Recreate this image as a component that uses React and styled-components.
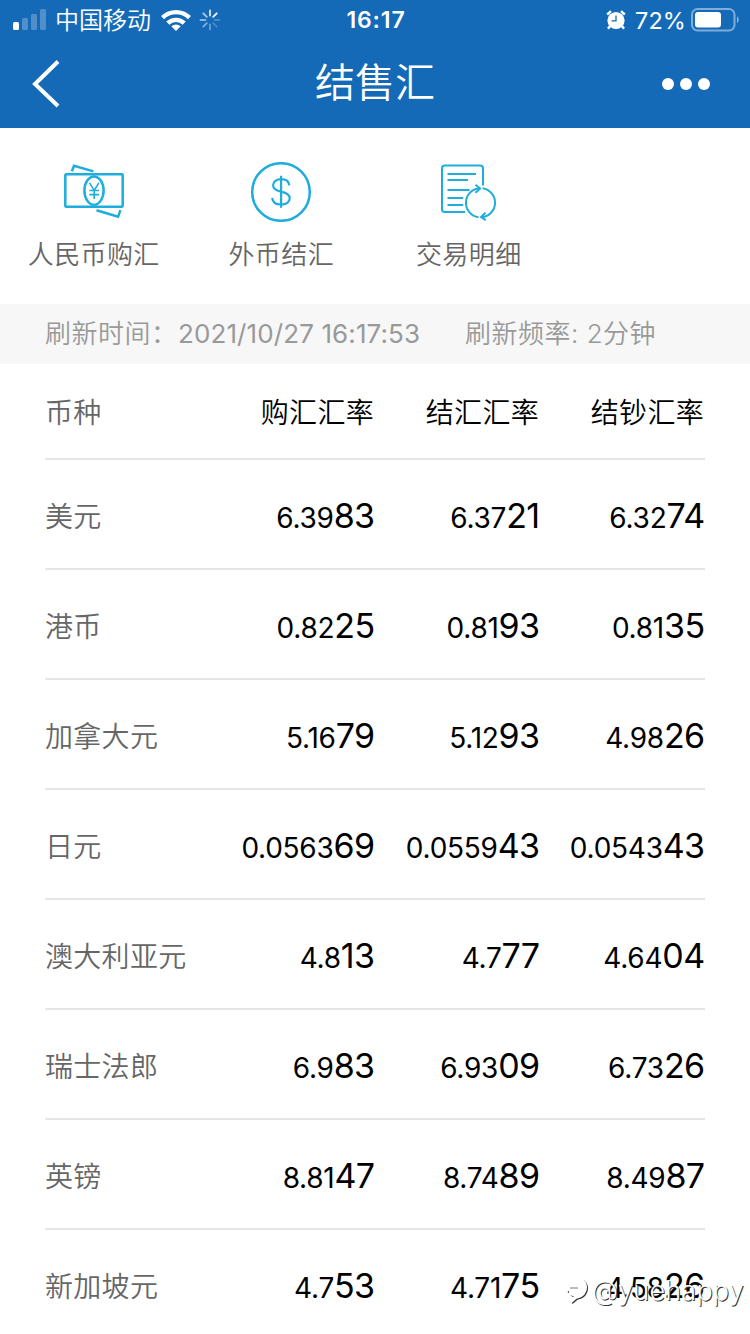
import React from 'react';
import styled, { createGlobalStyle } from 'styled-components';

const GlobalStyle = createGlobalStyle`
  * {
    box-sizing: border-box;
  }

  body {
    margin: 0;
    background: #fff;
    font-family: Inter, "Noto Sans CJK SC", sans-serif;
    overflow: hidden;
  }

  svg {
    display: block;
    flex-shrink: 0;
  }
`;

const Page = styled.div`
  position: relative;
  width: 750px;
  height: 1334px;
  overflow: hidden;
  background: #fff;
`;

const Header = styled.header`
  height: 128px;
  background: #156ab8;
  color: #fff;
`;

const StatusBar = styled.div`
  display: grid;
  grid-template-columns: 1fr 80px 1fr;
  align-items: center;
  height: 40px;
  padding: 0 10px 0 12px;
`;

const StatusGroup = styled.div`
  display: flex;
  align-items: center;
  justify-content: ${(props) => (props.$end ? 'flex-end' : 'flex-start')};
`;

const Carrier = styled.span`
  margin: 0 10px 0 8px;
  padding-top: 2px;
  font-size: 24px;
  font-weight: 350;
  line-height: 38px;
`;

const Spinner = styled.svg`
  margin-left: 8px;
`;

const Clock = styled.div`
  padding-top: 1px;
  font-size: 23px;
  font-weight: 600;
  line-height: 39px;
  letter-spacing: 0.9px;
  text-align: center;
`;

const Battery = styled.span`
  margin: 0 4px 0 9px;
  padding-top: 1px;
  font-size: 23.5px;
  line-height: 39px;
  letter-spacing: 0.1px;
`;

const NavBar = styled.div`
  display: grid;
  grid-template-columns: 120px 1fr 120px;
  align-items: center;
  height: 88px;
`;

const BackIcon = styled.svg`
  margin-left: 30px;
`;

const MoreIcon = styled.svg`
  margin-left: 31px;
`;

const PageTitle = styled.h1`
  margin: 0;
  padding-bottom: 2px;
  font-size: 40px;
  font-weight: 350;
  line-height: 84px;
  text-align: center;
`;

const Tools = styled.nav`
  display: grid;
  grid-template-columns: repeat(4, 187.5px);
  height: 176px;
  padding-top: 34px;
`;

const Tool = styled.div`
  display: flex;
  flex-direction: column;
  align-items: center;
`;

const ToolLabel = styled.span`
  margin-top: 15px;
  color: #666;
  font-size: 26px;
  font-weight: 350;
  line-height: 36px;
  letter-spacing: 0.4px;
  white-space: nowrap;
`;

const RefreshBar = styled.div`
  display: flex;
  height: 60px;
  padding-left: 45px;
  background: #f7f7f7;
  color: #999;
  font-size: 26px;
  font-weight: 350;
  line-height: 60px;
  white-space: nowrap;
`;

const RefreshLabel = styled.span`
  width: ${(props) => props.$width}px;
  letter-spacing: 0.5px;
`;

const RefreshTime = styled.span`
  width: 287px;
  font-weight: 400;
  line-height: 59px;
  letter-spacing: 0.1px;
`;

const Table = styled.div`
  margin: 0 45px;
`;

const Row = styled.div`
  display: grid;
  grid-template-columns: repeat(4, 165px);
  height: ${(props) => (props.$head ? 96 : 110)}px;
  border-bottom: 2px solid #e6e6e6;
  line-height: ${(props) => (props.$head ? 96 : 110)}px;
  white-space: nowrap;
`;

const Currency = styled.div`
  padding-top: ${(props) => (props.$head ? 1 : 2)}px;
  color: #666;
  font-size: 28px;
  font-weight: 350;
  letter-spacing: 0.3px;
`;

const ColumnTitle = styled.div`
  padding: 1px 1px 0 0;
  color: #000;
  font-size: 28px;
  font-weight: 350;
  letter-spacing: 0.3px;
  text-align: right;
`;

const Rate = styled.div`
  display: flex;
  align-items: baseline;
  justify-content: flex-end;
  padding: 1px 0.5px 0 0;
  color: #000;
  font-size: 28px;
  letter-spacing: -0.25px;
`;

const RateTail = styled.span`
  font-size: 34px;
  letter-spacing: -0.6px;
`;

const Watermark = styled.div`
  position: absolute;
  right: 6px;
  bottom: 25px;
  display: flex;
  align-items: center;
  gap: 3px;
  color: #fff;
  font-size: 27px;
  font-weight: 300;
  line-height: 36px;
  letter-spacing: 0.2px;
  text-shadow: 1px 1px 0 #333;
`;

const WatermarkLogo = styled.svg`
  filter: drop-shadow(1px 1px 0 #333);
`;

const rates = [
  { name: '美元', values: ['6.3983', '6.3721', '6.3274'] },
  { name: '港币', values: ['0.8225', '0.8193', '0.8135'] },
  { name: '加拿大元', values: ['5.1679', '5.1293', '4.9826'] },
  { name: '日元', values: ['0.056369', '0.055943', '0.054343'] },
  { name: '澳大利亚元', values: ['4.813', '4.777', '4.6404'] },
  { name: '瑞士法郎', values: ['6.983', '6.9309', '6.7326'] },
  { name: '英镑', values: ['8.8147', '8.7489', '8.4987'] },
  { name: '新加坡元', values: ['4.753', '4.7175', '4.5826'] },
];

const SignalIcon = () => (
  <svg width="35" height="22" viewBox="0 0 35 22" fill="#fff">
    <rect x="1" y="13" width="6" height="8" rx="1.5" />
    <g opacity="0.25">
      <rect x="10" y="9" width="6" height="12" rx="1.5" />
      <rect x="19" y="5" width="6" height="16" rx="1.5" />
      <rect x="28" y="0" width="6" height="21" rx="1.5" />
    </g>
  </svg>
);

const WifiIcon = () => (
  <svg width="30" height="22" viewBox="0 0 30 22" fill="none" stroke="#fff" strokeWidth="4.4">
    <path d="M1.5 8.6a19.3 19.3 0 0 1 27 0" />
    <path d="M6.8 14.2a11.8 11.8 0 0 1 16.4 0" />
    <path d="M15 22l-4.7-4.7a6.8 6.8 0 0 1 9.4 0z" fill="#fff" stroke="none" />
  </svg>
);

const SpinnerIcon = () => (
  <Spinner width="22" height="22" viewBox="0 0 22 22" stroke="#fff" strokeWidth="1.8" strokeLinecap="round">
    {[0.85, 0.95, 0.2, 0.2, 0.35, 0.45, 0.5, 0.65].map((opacity, i) => (
      <path key={i} d="M11 1.5v5" opacity={opacity} transform={`rotate(${i * 45} 11 11)`} />
    ))}
  </Spinner>
);

const AlarmIcon = () => (
  <svg width="20" height="20" viewBox="0 0 20 20" fill="none">
    <circle cx="10" cy="10.5" r="8.6" fill="#fff" />
    <path d="M1.2 4.5 5 1.2M15 1.2l3.8 3.3M4 16l-2 2.8M16 16l2 2.8" stroke="#fff" strokeWidth="2.4" />
    <path d="M10 5.5v5.3H5.5" stroke="#156ab8" strokeWidth="1.3" />
  </svg>
);

const BatteryIcon = () => (
  <svg width="50" height="24" viewBox="0 0 50 24" fill="none">
    <rect x="2" y="1" width="42.5" height="21.5" rx="5.5" stroke="#fff" strokeOpacity="0.45" strokeWidth="2" />
    <rect x="5" y="4" width="26" height="15.5" rx="3" fill="#fff" />
    <path d="M47 8.5c2.2 1 2.2 5.6 0 6.6z" fill="#fff" opacity="0.5" />
  </svg>
);

const BuyIcon = () => (
  <svg width="62" height="60" viewBox="0 0 62 60" fill="none" stroke="#1eaddc" strokeWidth="2.5">
    <rect x="2.3" y="12.3" width="57.4" height="32.4" rx="1" />
    <ellipse cx="31" cy="28.6" rx="9.6" ry="14.2" />
    <path d="M8.9 9.3l2.1-5.6L30.5 9.4M33.5 48.3l21.6 6.5 2.3-6.7" />
    <path d="M26.5 20.8l4.7 7.5 4.7-7.5M31.2 28.3V37M26.3 28.5h9.8M26.3 32.6h9.8" strokeWidth="1.6" />
  </svg>
);

const SettleIcon = () => (
  <svg width="62" height="60" viewBox="0 0 62 60" fill="none" stroke="#1eaddc">
    <circle cx="31" cy="30" r="28.8" strokeWidth="2.5" />
    <path
      d="M39.3 23.4c-.4-3.8-3.6-6.2-8.2-6.2s-8 2.5-8 6c0 3.4 2.5 5.2 8 6.4 5.6 1.2 8.6 3.1 8.6 6.7 0 3.7-3.4 6.2-8.6 6.2s-8.6-2.5-8.9-6.6M31.1 13.7v32"
      strokeWidth="2.2"
    />
  </svg>
);

const DetailIcon = () => (
  <svg width="62" height="60" viewBox="0 0 62 60" fill="none" stroke="#1eaddc" strokeWidth="2">
    <path d="M27 50H6.7Q4 50 4 47.3V6.2Q4 3.5 6.7 3.5h35.6Q45 3.5 45 6.2V23.5" />
    <path d="M9.5 12H38M9.5 18H30M9.5 28h22M9.5 36h15.7M9.5 43h15.7" strokeWidth="1.8" />
    <path d="M40.4 55.2A14.6 14.6 0 0 1 41.4 26.2M44.6 26.2A14.6 14.6 0 0 1 43.6 55.2" />
    <path d="M37.5 22.8l4.6 3.7-4.6 4.2M47.5 50.8L43 55l4.8 3.2" />
  </svg>
);

const tools = [
  { label: '人民币购汇', Icon: BuyIcon },
  { label: '外币结汇', Icon: SettleIcon },
  { label: '交易明细', Icon: DetailIcon },
];

const App = () => {
  return (
    <Page>
      <GlobalStyle />
      <Header>
        <StatusBar>
          <StatusGroup>
            <SignalIcon />
            <Carrier>中国移动</Carrier>
            <WifiIcon />
            <SpinnerIcon />
          </StatusGroup>
          <Clock>16:17</Clock>
          <StatusGroup $end>
            <AlarmIcon />
            <Battery>72%</Battery>
            <BatteryIcon />
          </StatusGroup>
        </StatusBar>
        <NavBar>
          <BackIcon width="32" height="50" viewBox="0 0 32 50" fill="none">
            <path d="M28 2.5L5 25l23 22" stroke="#fff" strokeWidth="4" />
          </BackIcon>
          <PageTitle>结售汇</PageTitle>
          <MoreIcon width="50" height="14" viewBox="0 0 50 14" fill="#fff">
            <circle cx="7" cy="7" r="6" />
            <circle cx="25" cy="7" r="6" />
            <circle cx="43" cy="7" r="6" />
          </MoreIcon>
        </NavBar>
      </Header>

      <Tools>
        {tools.map(({ label, Icon }) => (
          <Tool key={label}>
            <Icon />
            <ToolLabel>{label}</ToolLabel>
          </Tool>
        ))}
      </Tools>

      <RefreshBar>
        <RefreshLabel $width={133}>刷新时间：</RefreshLabel>
        <RefreshTime>2021/10/27 16:17:53</RefreshTime>
        <RefreshLabel $width={200}>刷新频率: 2分钟</RefreshLabel>
      </RefreshBar>

      <Table>
        <Row $head>
          <Currency $head>币种</Currency>
          <ColumnTitle>购汇汇率</ColumnTitle>
          <ColumnTitle>结汇汇率</ColumnTitle>
          <ColumnTitle>结钞汇率</ColumnTitle>
        </Row>
        {rates.map((rate) => (
          <Row key={rate.name}>
            <Currency>{rate.name}</Currency>
            {rate.values.map((value) => (
              <Rate key={value}>
                {value.slice(0, -2)}
                <RateTail>{value.slice(-2)}</RateTail>
              </Rate>
            ))}
          </Row>
        ))}
      </Table>

      <Watermark>
        <WatermarkLogo width="24" height="30" viewBox="0 0 24 30" fill="#fff">
          <path d="M1 12h3C5 6 9 2 14 2c4 0 8 4 8 9 0 6-4 10-8 11-3 0-4 3-8 5 0-3 1-5 3-7-3 0-5-1-5-5l-2 1z" />
          <path d="M5 12h8" stroke="#555" strokeWidth="0.8" />
        </WatermarkLogo>
        @yuehappy
      </Watermark>
    </Page>
  );
};

export default App;
